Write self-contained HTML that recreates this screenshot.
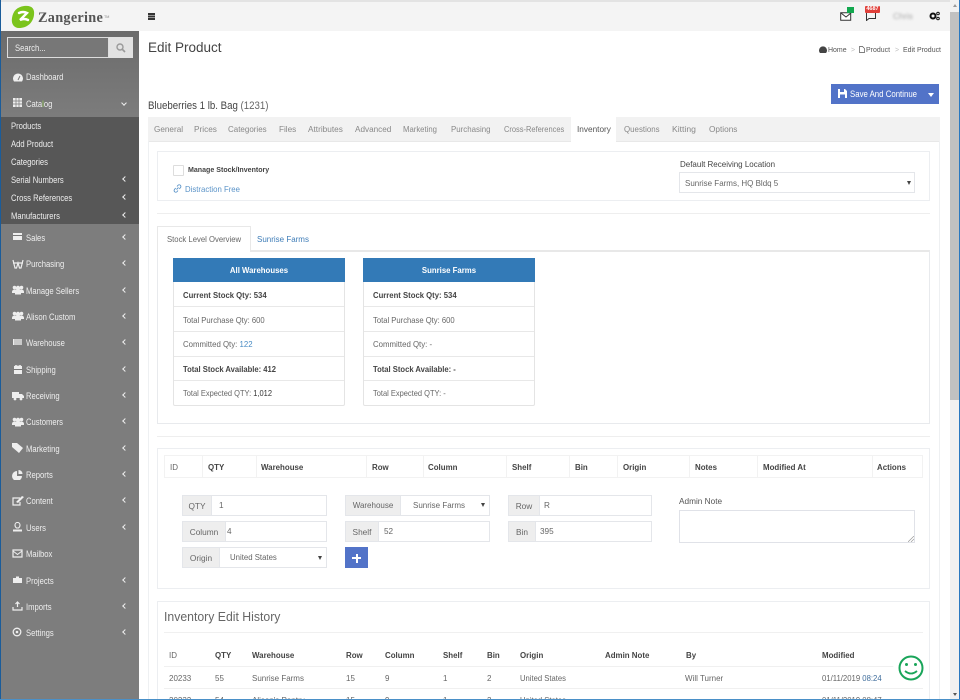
<!DOCTYPE html>
<html><head><meta charset="utf-8"><style>
html,body{margin:0;padding:0;background:#fff;width:960px;height:700px;overflow:hidden}
body{position:relative;font-family:"Liberation Sans",sans-serif;font-size:8.6px;color:#666}
div,span,svg{position:absolute}
span span{position:static}
.t{white-space:nowrap;line-height:12px;transform:translateY(-6px) scaleX(var(--x,.93));transform-origin:left center}
.b{font-weight:bold;color:#444;--x:.92;font-size:8.600px}
.m{color:#eee;font-size:8.800px;left:26px;--x:.87}
.s{color:#eee;font-size:8.800px;left:11px;--x:.87}
.ar{left:123px;width:3px;height:3px;border-left:1.700px solid #eee;border-bottom:1.700px solid #eee;transform:rotate(45deg)}
.ic{left:12px;width:12px;height:10px}
.box{border:1px solid #eceef1;background:#fff;box-sizing:border-box}
.tab{color:#888;font-size:8.600px;top:129px}
.h{background:#eee;border:1px solid #e4e6ea;box-sizing:border-box;height:21px;color:#666;text-align:center;line-height:20px;font-size:8.300px}
.i{border:1px solid #e4e6ea;box-sizing:border-box;height:21px;background:#fff;color:#666;line-height:20px;font-size:8.200px}
.r{left:174px;width:170px;height:1px;background:#e8e8e8}
.r2{left:364px;width:170px;height:1px;background:#e8e8e8}
.v{top:456px;width:1px;height:22px;background:#f2f2f2}
.arr{width:0;height:0;border-left:2.500px solid transparent;border-right:2.500px solid transparent;border-top:4px solid #444}
.ch{font-weight:bold;color:#fff;text-align:center;line-height:25px;font-size:7.800px;background:#337ab7;height:24px;width:172px;top:258px}
</style></head><body>
<div style="left:0;top:0;width:960px;height:2px;background:#e3e3e3"></div>
<div style="left:1px;top:2px;width:949px;height:29px;background:#f4f4f4"></div>
<div style="left:0;top:0;width:1px;height:700px;background:#1a5c9a"></div>
<svg style="left:11px;top:5px" width="24" height="24" viewBox="0 0 24 24"><path d="M13 1C20 0 24 3 23 10C22 18 16 23 8 23C3 23 0 19 1 13C2 6 6 2 13 1Z" fill="#7bc41c"/><path d="M8 8Q12 6 16 8L9 15Q13 13 17 15" fill="none" stroke="#fff" stroke-width="2.400" stroke-linecap="round"/></svg>
<span class="t" style="left:38px;top:18px;font-family:'Liberation Serif',serif;font-size:15px;font-weight:bold;color:#555;letter-spacing:.3px;--x:.95">Zangerine</span>
<span class="t" style="left:104px;top:17px;font-size:4px;color:#888">TM</span>
<div style="left:148px;top:13px;width:7px;height:1.500px;background:#333;box-shadow:0 2.500px #333,0 5px #333"></div>

<div style="left:1px;top:31px;width:138px;height:669px;background:linear-gradient(#6b6b6b,#7d7d7d 90px,#7d7d7d)"></div>
<div style="left:7px;top:37px;width:102px;height:21px;box-sizing:border-box;border:1px solid #ddd;background:#777"></div>
<span class="t" style="left:15px;top:48px;color:#eee;font-size:8.800px;--x:.87">Search...</span>
<div style="left:109px;top:37px;width:24px;height:21px;background:#e2e2e2"></div>
<svg style="left:116px;top:43px" width="10" height="10" viewBox="0 0 10 10"><circle cx="4" cy="4" r="3" fill="none" stroke="#999" stroke-width="1.400"/><path d="M6 6L9 9" stroke="#999" stroke-width="1.600"/></svg>

<svg class="ic" style="top:72px" viewBox="0 0 12 10"><path d="M2 9.500A5 5 0 1 1 10 9.500Z" fill="#eee"/><path d="M6 8L8 4" stroke="#777" stroke-width="1"/></svg>
<span class="t m" style="top:77px">Dashboard</span>
<svg class="ic" style="top:98px" viewBox="0 0 12 10"><path d="M1 0h9v9H1z" fill="#eee"/><path d="M4 0v9M7 0v9M1 3h9M1 6h9" stroke="#777" stroke-width=".7"/></svg>
<span class="t m" style="top:104px">Cata<span style="color:#9ad45a">l</span>og</span>
<div style="left:122px;top:101px;width:3px;height:3px;border-right:1.700px solid #eee;border-bottom:1.700px solid #eee;transform:rotate(45deg)"></div>

<div style="left:1px;top:117px;width:138px;height:107px;background:#575757"></div>
<span class="t s" style="top:126px">Products</span>
<span class="t s" style="top:144px">Add Product</span>
<span class="t s" style="top:162px">Categories</span>
<span class="t s" style="top:180px">Serial Numbers</span><div class="ar" style="top:177px"></div>
<span class="t s" style="top:198px">Cross References</span><div class="ar" style="top:195px"></div>
<span class="t s" style="top:216px">Manufacturers</span><div class="ar" style="top:213px"></div>

<svg class="ic" style="top:232px" viewBox="0 0 12 10"><path d="M1 1h9v7H1z" fill="#eee"/><path d="M1 3.500h9" stroke="#777" stroke-width="1"/></svg><span class="t m" style="top:238px">Sales</span><div class="ar" style="top:235px"></div>
<svg class="ic" style="top:259px" viewBox="0 0 12 10"><path d="M1 1l2 8h1.500L6 4l1.500 5H9l2-8M1 4h10" fill="none" stroke="#eee" stroke-width="1.200"/></svg><span class="t m" style="top:264px">Purchasing</span><div class="ar" style="top:261px"></div>
<svg class="ic" style="top:285px" viewBox="0 0 12 10"><circle cx="2.500" cy="2.500" r="1.800" fill="#eee"/><circle cx="9.500" cy="2.500" r="1.800" fill="#eee"/><circle cx="6" cy="3" r="2.200" fill="#eee"/><path d="M0 7q0-2 2-2.500h8q2 .5 2 2.500v1H9v1.500H3V8H0z" fill="#eee"/></svg><span class="t m" style="top:291px">Manage Sellers</span><div class="ar" style="top:288px"></div>
<svg class="ic" style="top:311px" viewBox="0 0 12 10"><circle cx="2.500" cy="2.500" r="1.800" fill="#eee"/><circle cx="9.500" cy="2.500" r="1.800" fill="#eee"/><circle cx="6" cy="3" r="2.200" fill="#eee"/><path d="M0 7q0-2 2-2.500h8q2 .5 2 2.500v1H9v1.500H3V8H0z" fill="#eee"/></svg><span class="t m" style="top:317px">Alison Custom</span><div class="ar" style="top:314px"></div>
<svg class="ic" style="top:338px" viewBox="0 0 12 10"><path d="M1 1h9v6H1z" fill="#eee"/><path d="M3 1v6M5 1v6M7 1v6M9 1v6" stroke="#777" stroke-width=".6"/></svg><span class="t m" style="top:343px">Warehouse</span><div class="ar" style="top:340px"></div>
<svg class="ic" style="top:365px" viewBox="0 0 12 10"><path d="M2 1h8v8H2z" fill="#eee"/><path d="M1 4.500h10" stroke="#777"/><path d="M3 0l3 1.500L9 0" stroke="#eee" fill="none"/></svg><span class="t m" style="top:370px">Shipping</span><div class="ar" style="top:367px"></div>
<svg class="ic" style="top:391px" viewBox="0 0 12 10"><path d="M0 1h7v6H0zM7 3h3l2 2v2H7z" fill="#eee"/><circle cx="3" cy="8" r="1.400" fill="#eee"/><circle cx="9" cy="8" r="1.400" fill="#eee"/></svg><span class="t m" style="top:396px">Receiving</span><div class="ar" style="top:393px"></div>
<svg class="ic" style="top:417px" viewBox="0 0 12 10"><circle cx="2.500" cy="2.500" r="1.800" fill="#eee"/><circle cx="9.500" cy="2.500" r="1.800" fill="#eee"/><circle cx="6" cy="3" r="2.200" fill="#eee"/><path d="M0 7q0-2 2-2.500h8q2 .5 2 2.500v1H9v1.500H3V8H0z" fill="#eee"/></svg><span class="t m" style="top:422px">Customers</span><div class="ar" style="top:419px"></div>
<svg class="ic" style="top:443px" viewBox="0 0 12 10"><path d="M0 0h5l6 5-4 5L0 4z" fill="#eee"/></svg><span class="t m" style="top:449px">Marketing</span><div class="ar" style="top:446px"></div>
<svg class="ic" style="top:470px" viewBox="0 0 12 10"><path d="M5 1v5h5A5 5 0 1 1 5 1z" fill="#eee"/><path d="M6.500 0A4 4 0 0 1 10.500 4H6.500z" fill="#eee"/></svg><span class="t m" style="top:475px">Reports</span><div class="ar" style="top:472px"></div>
<svg class="ic" style="top:496px" viewBox="0 0 12 10"><path d="M8 2H1v7h7V6" fill="none" stroke="#eee" stroke-width="1.200"/><path d="M4 6l6-6 2 1-6 6z" fill="#eee"/></svg><span class="t m" style="top:501px">Content</span><div class="ar" style="top:498px"></div>
<svg class="ic" style="top:522px" viewBox="0 0 12 10"><path d="M3 3a2.500 2.500 0 1 1 5 0q0 2-1.500 3H4.500Q3 5 3 3z" fill="none" stroke="#eee" stroke-width="1.100"/><path d="M1 9.500h9V7.500H1z" fill="#eee"/></svg><span class="t m" style="top:528px">Users</span><div class="ar" style="top:525px"></div>
<svg class="ic" style="top:549px" viewBox="0 0 12 10"><path d="M1 1h9v7H1z" fill="none" stroke="#eee" stroke-width="1.200"/><path d="M1 2l4.500 3.500L10 2" fill="none" stroke="#eee"/></svg><span class="t m" style="top:554px">Mailbox</span>
<svg class="ic" style="top:575px" viewBox="0 0 12 10"><path d="M1 3h9v5H1zM4 1.500h3V3H4z" fill="#eee"/></svg><span class="t m" style="top:581px">Projects</span><div class="ar" style="top:578px"></div>
<svg class="ic" style="top:601px" viewBox="0 0 12 10"><path d="M1 6v3h9V6" fill="none" stroke="#eee" stroke-width="1.200"/><path d="M5.500 1v5M3.500 3l2-2 2 2" fill="none" stroke="#eee" stroke-width="1.200"/></svg><span class="t m" style="top:607px">Imports</span><div class="ar" style="top:604px"></div>
<svg class="ic" style="top:627px" viewBox="0 0 12 10"><circle cx="5" cy="5" r="3.800" fill="none" stroke="#eee" stroke-width="1.300"/><circle cx="5" cy="5" r="1.300" fill="#eee"/></svg><span class="t m" style="top:633px">Settings</span><div class="ar" style="top:630px"></div>

<svg style="left:840px;top:12px" width="12" height="9" viewBox="0 0 12 9"><path d="M.7.700h10v7.500H.7z" fill="#fff" stroke="#333"/><path d="M1 1l5 4 5-4" fill="none" stroke="#333"/></svg>
<div style="left:847px;top:7px;width:7px;height:6px;background:#12a84f"></div>
<svg style="left:866px;top:12px" width="11" height="9" viewBox="0 0 11 9"><path d="M.5.500h9v6H3L.5 8.500z" fill="none" stroke="#333"/></svg>
<div style="left:865px;top:6px;width:15px;height:7px;background:#e0403a;color:#fff;font-size:5.500px;font-weight:bold;line-height:7px;text-align:center;border-radius:1px">4687</div>
<span class="t" style="left:893px;top:16px;color:#aaa;font-size:8.500px;filter:blur(1.200px);--x:1">Chris</span>
<svg style="left:929px;top:11px" width="11" height="10" viewBox="0 0 11 10"><circle cx="4" cy="5" r="2.500" fill="none" stroke="#111" stroke-width="2"/><circle cx="9" cy="2.500" r="1.300" fill="none" stroke="#111"/><circle cx="9" cy="7.500" r="1.300" fill="none" stroke="#111"/></svg>

<span class="t" style="left:148px;top:48px;font-size:13.500px;color:#444;--x:1">Edit Product</span>
<svg style="left:819px;top:46px" width="8" height="7" viewBox="0 0 8 7"><path d="M1 7A4 4 0 1 1 7 7Z" fill="#444"/></svg>
<span class="t" style="left:828px;top:50px;font-size:7.500px;color:#555">Home</span>
<span class="t" style="left:851px;top:50px;font-size:7.500px;color:#bbb">&gt;</span>
<svg style="left:859px;top:46px" width="6" height="7" viewBox="0 0 6 7"><path d="M.5.500h3l2 2v4h-5z" fill="none" stroke="#555" stroke-width=".7"/></svg>
<span class="t" style="left:866px;top:50px;font-size:7.500px;color:#555">Product</span>
<span class="t" style="left:895px;top:50px;font-size:7.500px;color:#bbb">&gt;</span>
<span class="t" style="left:903px;top:50px;font-size:7.500px;color:#555">Edit Product</span>

<div style="left:831px;top:84px;width:108px;height:20px;background:#5273c8"></div>
<svg style="left:838px;top:89px" width="9" height="9" viewBox="0 0 9 9"><path d="M0 0h7l2 2v7H0z" fill="#fff"/><path d="M2 0h4v3H2zM2 5.500h5V9H2z" fill="#5273c8"/></svg>
<span class="t" style="left:850px;top:94px;color:#fff;font-size:8.800px;--x:.89">Save And Continue</span>
<div class="arr" style="left:928px;top:93px;border-top-color:#fff;border-left-width:3px;border-right-width:3px"></div>

<span class="t" style="left:148px;top:106px;font-size:11px;color:#444;--x:.88">Blueberries 1 lb. Bag <span style="color:#666">(1231)</span></span>

<div style="left:148px;top:117px;width:792px;height:25px;background:#f2f2f2;border-bottom:1px solid #e8e8e8;box-sizing:border-box"></div>
<div style="left:148px;top:141px;width:1px;height:559px;background:#eef0f2"></div>
<div style="left:939px;top:141px;width:1px;height:559px;background:#eef0f2"></div>
<span class="t tab" style="left:154px;--x:.95">General</span>
<span class="t tab" style="left:194px;--x:.96">Prices</span>
<span class="t tab" style="left:228px;--x:.93">Categories</span>
<span class="t tab" style="left:279px;--x:.95">Files</span>
<span class="t tab" style="left:308px;--x:.96">Attributes</span>
<span class="t tab" style="left:355px;--x:.95">Advanced</span>
<span class="t tab" style="left:403px;--x:.9">Marketing</span>
<span class="t tab" style="left:451px;--x:.92">Purchasing</span>
<span class="t tab" style="left:504px;--x:.87">Cross-References</span>
<div style="left:571px;top:117px;width:45px;height:25px;background:#fff"></div>
<span class="t tab" style="left:577px;color:#555;--x:.96">Inventory</span>
<span class="t tab" style="left:624px;--x:.92">Questions</span>
<span class="t tab" style="left:672px;--x:1">Kitting</span>
<span class="t tab" style="left:709px;--x:.96">Options</span>

<div class="box" style="left:157px;top:151px;width:773px;height:50px"></div>
<div style="left:173px;top:165px;width:9px;height:9px;border:1px solid #ddd;border-radius:1px;background:#fff"></div>
<span class="t b" style="left:188px;top:170px;font-size:7.600px;--x:.93">Manage Stock/Inventory</span>
<svg style="left:173px;top:184px" width="9" height="9" viewBox="0 0 9 9"><path d="M3.500 5.500L5.500 3.500M4 2.500l1-1.200a1.600 1.600 0 0 1 2.400 2.400L6.300 5M5 6.500l-1 1.200a1.600 1.600 0 0 1-2.400-2.400L2.700 4" fill="none" stroke="#5a93c8" stroke-width=".9"/></svg>
<span class="t" style="left:185px;top:189px;color:#5a93c8;font-size:8.400px">Distraction Free</span>
<span class="t" style="left:680px;top:164px;font-size:8.500px;color:#444;--x:.94">Default Receiving Location</span>
<div class="i" style="left:679px;top:172px;width:236px"></div>
<span class="t" style="left:685px;top:183px;font-size:8.500px;--x:.94">Sunrise Farms, HQ Bldq 5</span>
<div class="arr" style="left:907px;top:181px"></div>
<div style="left:157px;top:213px;width:773px;height:1px;background:#eee"></div>

<div style="left:157px;top:250px;width:773px;height:174px;border:1px solid #e8eaed;border-top:2px solid #e8e8e8;box-sizing:border-box"></div>
<div class="box" style="left:157px;top:226px;width:94px;height:26px;border-bottom:0;border-color:#e8e8e8"></div>
<span class="t" style="left:167px;top:239px;font-size:8.400px;--x:.92">Stock Level Overview</span>
<span class="t" style="left:257px;top:239px;color:#3f7db8;font-size:8.600px;--x:.93">Sunrise Farms</span>

<div class="box" style="left:173px;top:258px;width:172px;height:148px;border-color:#e4e4e4;border-radius:2px"></div>
<div class="ch" style="left:173px">All Warehouses</div>
<div class="box" style="left:363px;top:258px;width:172px;height:148px;border-color:#e4e4e4;border-radius:2px"></div>
<div class="ch" style="left:363px">Sunrise Farms</div>
<div class="r" style="top:306px"></div><div class="r" style="top:331px"></div><div class="r" style="top:356px"></div><div class="r" style="top:380px"></div>
<div class="r2" style="top:306px"></div><div class="r2" style="top:331px"></div><div class="r2" style="top:356px"></div><div class="r2" style="top:380px"></div>
<span class="t b" style="left:183px;top:295px;font-size:8.300px;--x:.93">Current Stock Qty: 534</span>
<span class="t" style="left:183px;top:320px;font-size:8.500px;--x:.9">Total Purchase Qty: 600</span>
<span class="t" style="left:183px;top:344px;font-size:8.500px;--x:.92">Committed Qty: <span style="color:#4a8cc4">122</span></span>
<span class="t b" style="left:183px;top:369px;font-size:8.300px;--x:.92">Total Stock Available: 412</span>
<span class="t" style="left:183px;top:393px;font-size:8.500px;--x:.88">Total Expected QTY: <span style="color:#333">1,012</span></span>
<span class="t b" style="left:373px;top:295px;font-size:8.300px;--x:.93">Current Stock Qty: 534</span>
<span class="t" style="left:373px;top:320px;font-size:8.500px;--x:.9">Total Purchase Qty: 600</span>
<span class="t" style="left:373px;top:344px;font-size:8.500px;--x:.92">Committed Qty: -</span>
<span class="t b" style="left:373px;top:369px;font-size:8.300px;--x:.92">Total Stock Available: -</span>
<span class="t" style="left:373px;top:393px;font-size:8.500px;--x:.88">Total Expected QTY: -</span>

<div style="left:157px;top:436px;width:773px;height:1px;background:#eee"></div>
<div class="box" style="left:157px;top:448px;width:773px;height:141px"></div>
<div style="left:164px;top:455px;width:759px;height:23px;border:1px solid #f2f2f2;box-sizing:border-box"></div>
<div class="v" style="left:202px"></div><div class="v" style="left:256px"></div><div class="v" style="left:366px"></div><div class="v" style="left:423px"></div><div class="v" style="left:506px"></div><div class="v" style="left:569px"></div><div class="v" style="left:617px"></div><div class="v" style="left:689px"></div><div class="v" style="left:757px"></div><div class="v" style="left:872px"></div>
<span class="t" style="left:170px;top:467px">ID</span>
<span class="t b" style="left:208px;top:467px">QTY</span>
<span class="t b" style="left:261px;top:467px">Warehouse</span>
<span class="t b" style="left:372px;top:467px">Row</span>
<span class="t b" style="left:428px;top:467px">Column</span>
<span class="t b" style="left:512px;top:467px">Shelf</span>
<span class="t b" style="left:575px;top:467px">Bin</span>
<span class="t b" style="left:623px;top:467px">Origin</span>
<span class="t b" style="left:695px;top:467px">Notes</span>
<span class="t b" style="left:763px;top:467px">Modified At</span>
<span class="t b" style="left:877px;top:467px">Actions</span>

<div class="i" style="left:182px;top:495px;width:145px;padding-left:36px">1</div><div class="h" style="left:182px;top:495px;width:30px">QTY</div>
<div class="i" style="left:182px;top:521px;width:145px;padding-left:44px">4</div><div class="h" style="left:182px;top:521px;width:44px">Column</div>
<div class="i" style="left:182px;top:547px;width:145px;padding-left:47px;font-size:7.800px">United States</div><div class="h" style="left:182px;top:547px;width:38px">Origin</div><div class="arr" style="left:318px;top:556px"></div>
<div class="i" style="left:345px;top:495px;width:145px;padding-left:67px;font-size:8px">Sunrise Farms</div><div class="h" style="left:345px;top:495px;width:56px;font-size:8px">Warehouse</div><div class="arr" style="left:481px;top:503px"></div>
<div class="i" style="left:345px;top:521px;width:145px;padding-left:38px">52</div><div class="h" style="left:345px;top:521px;width:34px">Shelf</div>
<div style="left:345px;top:547px;width:23px;height:21px;background:#5273c8"></div>
<div style="left:352px;top:557px;width:9px;height:2px;background:#fff"></div><div style="left:355.500px;top:553.500px;width:2px;height:9px;background:#fff"></div>
<div class="i" style="left:508px;top:495px;width:144px;padding-left:35px">R</div><div class="h" style="left:508px;top:495px;width:32px">Row</div>
<div class="i" style="left:508px;top:521px;width:144px;padding-left:31px">395</div><div class="h" style="left:508px;top:521px;width:28px">Bin</div>
<span class="t" style="left:679px;top:501px;color:#555;font-size:8.500px;--x:.97">Admin Note</span>
<div class="box" style="left:679px;top:510px;width:236px;height:33px;border-color:#e0e2e8"></div>
<svg style="left:908px;top:536px" width="6" height="6" viewBox="0 0 6 6"><path d="M0 6L6 0M3 6L6 3" stroke="#999" stroke-width=".7"/></svg>

<div class="box" style="left:157px;top:601px;width:773px;height:110px"></div>
<span class="t" style="left:164px;top:617px;font-size:12.500px;color:#666;--x:.98">Inventory Edit History</span>
<div style="left:164px;top:632px;width:759px;height:1px;background:#f0f0f0"></div>
<span class="t" style="left:169px;top:655px">ID</span>
<span class="t b" style="left:215px;top:655px">QTY</span>
<span class="t b" style="left:252px;top:655px">Warehouse</span>
<span class="t b" style="left:346px;top:655px">Row</span>
<span class="t b" style="left:385px;top:655px">Column</span>
<span class="t b" style="left:443px;top:655px">Shelf</span>
<span class="t b" style="left:487px;top:655px">Bin</span>
<span class="t b" style="left:520px;top:655px">Origin</span>
<span class="t b" style="left:605px;top:655px">Admin Note</span>
<span class="t b" style="left:686px;top:655px">By</span>
<span class="t b" style="left:822px;top:655px">Modified</span>
<div style="left:164px;top:666px;width:759px;height:1px;background:#f0f0f0"></div>
<div style="left:164px;top:688px;width:759px;height:1px;background:#f0f0f0"></div>
<span class="t" style="left:169px;top:678px">20233</span>
<span class="t" style="left:215px;top:678px">55</span>
<span class="t" style="left:252px;top:678px">Sunrise Farms</span>
<span class="t" style="left:346px;top:678px">15</span>
<span class="t" style="left:385px;top:678px">9</span>
<span class="t" style="left:443px;top:678px">1</span>
<span class="t" style="left:487px;top:678px">2</span>
<span class="t" style="left:520px;top:678px;--x:.89">United States</span>
<span class="t" style="left:685px;top:678px">Will Turner</span>
<span class="t" style="left:822px;top:678px;--x:.9">01/11/2019 <span style="color:#3f6d9c">08:24</span></span>
<span class="t" style="left:169px;top:700px">20232</span>
<span class="t" style="left:215px;top:700px">54</span>
<span class="t" style="left:252px;top:700px">Alison's Pantry</span>
<span class="t" style="left:346px;top:700px">15</span>
<span class="t" style="left:385px;top:700px">9</span>
<span class="t" style="left:443px;top:700px">1</span>
<span class="t" style="left:487px;top:700px">2</span>
<span class="t" style="left:520px;top:700px;--x:.89">United States</span>
<span class="t" style="left:822px;top:700px;--x:.9">01/11/2019 08:47</span>

<div style="left:893px;top:652px;width:36px;height:36px;background:#fff;border-radius:50%"></div>
<svg style="left:898px;top:655px" width="26" height="26" viewBox="0 0 26 26"><circle cx="13" cy="13" r="11.500" fill="none" stroke="#1aa55a" stroke-width="2"/><circle cx="8.500" cy="9.500" r="1.500" fill="#1aa55a"/><circle cx="17.500" cy="9.500" r="1.500" fill="#1aa55a"/><path d="M7 16q6 5 12 0" fill="none" stroke="#1aa55a" stroke-width="1.800"/></svg>

<div style="left:950px;top:0;width:10px;height:700px;background:#f1f1f1"></div>
<div style="left:950px;top:12px;width:9px;height:388px;background:#c1c1c1"></div>
<div style="left:953px;top:4px;width:0;height:0;border-left:2.500px solid transparent;border-right:2.500px solid transparent;border-bottom:3px solid #999"></div>
<div style="left:953px;top:693px;width:0;height:0;border-left:2.500px solid transparent;border-right:2.500px solid transparent;border-top:3px solid #555"></div>
<div style="left:959px;top:0;width:1px;height:700px;background:#2a78c0"></div>
<div style="left:0;top:699px;width:960px;height:1px;background:#4a90c8"></div>
</body></html>
